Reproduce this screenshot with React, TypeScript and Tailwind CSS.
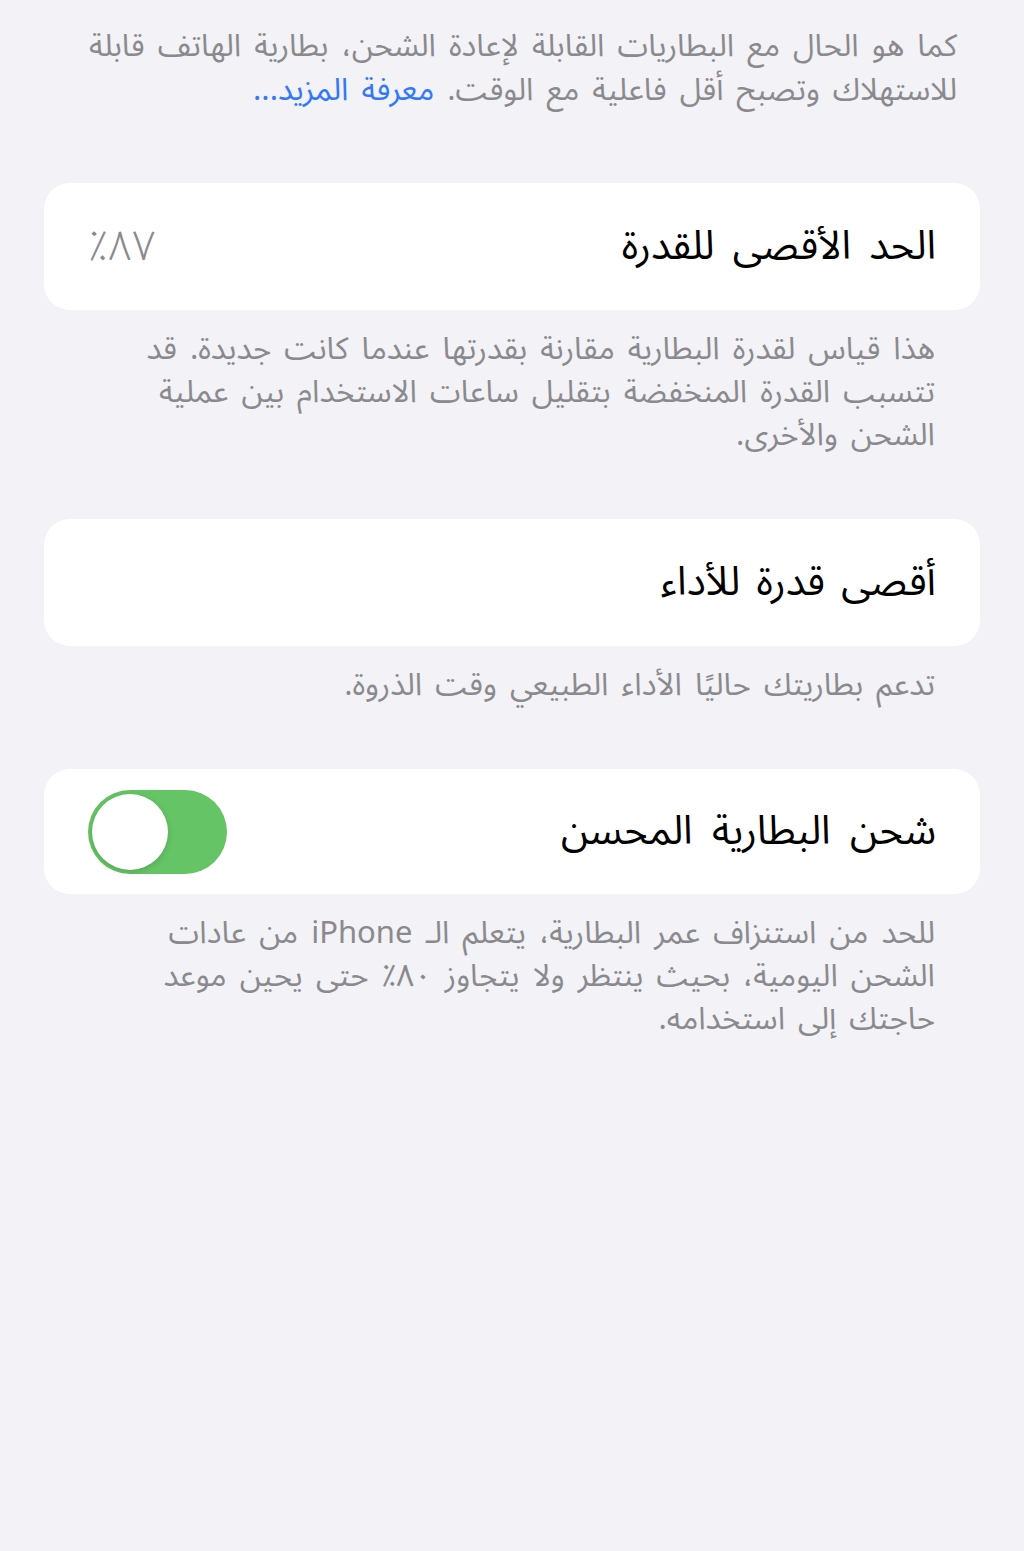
import React from "react";

const Footer = ({ children }: { children: React.ReactNode }) => (
  <p className="px-[89px] pt-[18px] text-[31px] leading-[43px] [word-spacing:5px] text-[#8a8a8e]">
    {children}
  </p>
);

const Row = ({ children, h = "h-[127px]" }: { children: React.ReactNode; h?: string }) => (
  <div className={`mx-[44px] ${h} rounded-[26px] bg-white px-[44px] flex items-center justify-between`}>
    {children}
  </div>
);

const App = () => {
  return (
    <div
      dir="rtl"
      className="min-h-[1551px] w-full bg-[#f2f2f7] font-['Noto_Sans_Arabic','DejaVu_Sans',sans-serif] pt-[24px]"
    >
      <p className="px-[67px] text-[31px] leading-[44px] [word-spacing:5px] text-[#8a8a8e]">
        كما هو الحال مع البطاريات القابلة لإعادة الشحن، بطارية الهاتف قابلة
        <br />
        للاستهلاك وتصبح أقل فاعلية مع الوقت.{" "}
        <span className="text-[#3478f6]">معرفة المزيد...</span>
      </p>

      <div className="mt-[71px]">
        <Row>
          <span className="text-[40px] [word-spacing:8px] text-black">الحد الأقصى للقدرة</span>
          <span className="text-[42px] text-[#8a8a8e] font-light">٨٧٪</span>
        </Row>
        <Footer>
          هذا قياس لقدرة البطارية مقارنة بقدرتها عندما كانت جديدة. قد
          <br />
          تتسبب القدرة المنخفضة بتقليل ساعات الاستخدام بين عملية
          <br />
          الشحن والأخرى.
        </Footer>
      </div>

      <div className="mt-[62px]">
        <Row>
          <span className="text-[40px] [word-spacing:6px] text-black">أقصى قدرة للأداء</span>
        </Row>
        <Footer>تدعم بطاريتك حاليًا الأداء الطبيعي وقت الذروة.</Footer>
      </div>

      <div className="mt-[62px]">
        <Row h="h-[125px]">
          <span className="text-[40px] [word-spacing:9px] text-black">شحن البطارية المحسن</span>
          <div className="w-[139px] h-[84px] rounded-full bg-[#65c466] flex items-center justify-end px-[4px]">
            <div className="w-[76px] h-[76px] rounded-full bg-white shadow-[0_2px_6px_rgba(0,0,0,0.15)]" />
          </div>
        </Row>
        <Footer>
          للحد من استنزاف عمر البطارية، يتعلم الـ iPhone من عادات
          <br />
          الشحن اليومية، بحيث ينتظر ولا يتجاوز ٨٠٪ حتى يحين موعد
          <br />
          حاجتك إلى استخدامه.
        </Footer>
      </div>
    </div>
  );
};

export default App;
